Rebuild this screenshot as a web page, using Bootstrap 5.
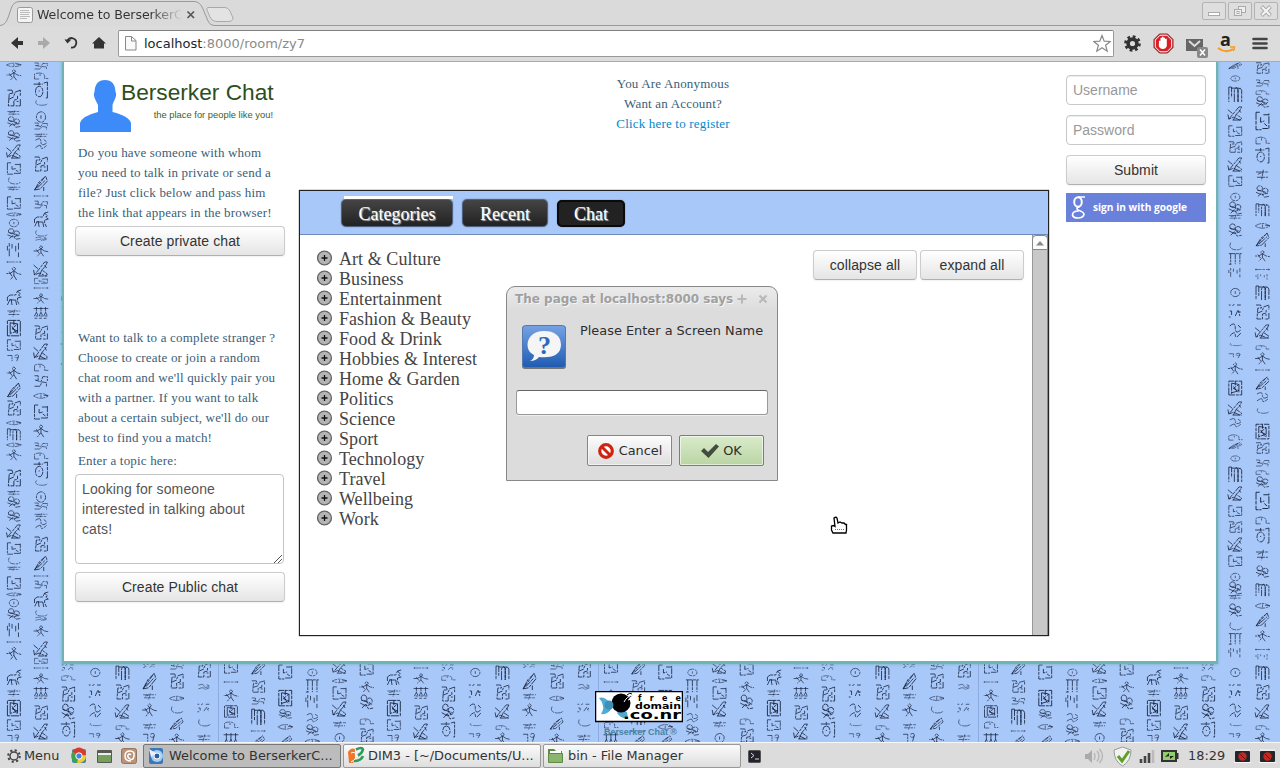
<!DOCTYPE html>
<html lang="en">
<head>
<meta charset="utf-8">
<meta name="viewport" content="width=device-width, initial-scale=1">
<title>Welcome to BerserkerChat</title>
<link rel="stylesheet" href="https://cdn.jsdelivr.net/npm/bootstrap@5.3.0/dist/css/bootstrap.min.css">
<style>
body{width:1280px;height:768px;overflow:hidden;font-family:"Liberation Sans",Arial,sans-serif;font-size:14px;line-height:20px;color:#333;background:#dcdcdc}
svg{display:block;flex:none}
.ui{font-family:"DejaVu Sans",sans-serif}
.serif{font-family:"Liberation Serif",serif;font-size:13px;line-height:20px;color:#3a6078;letter-spacing:.18px;white-space:nowrap}
.tabstrip{height:26px}
.tabtitle{left:37px;top:5px;width:146px;font-size:12.6px;white-space:nowrap;letter-spacing:-.1px;background:linear-gradient(90deg,#333 78%,#dcdcdc 100%);-webkit-background-clip:text;color:transparent}
.winbtns{top:2px;right:2px;gap:2px}
.winbtn{width:24px;height:18px;border:1px solid #b3b3b3;border-radius:2px;background:#dedede}
.toolbar{height:36px;border-bottom:1px solid #aaa;background:#dcdcdc}
.urlbar{width:996px;height:27px;margin-left:11px;border:1px solid #999;border-top-color:#808080;border-radius:2px;background:#fff;font-size:13px;color:#8b8b8b}
.page{height:680px;background:#a8c8fa;overflow:hidden}
.sheet{margin:0 62px;height:602px;background:#fff;border:solid #70b3b4;border-width:0 2px 3px;box-shadow:0 0 3px #70b3b4}
.leftcol{width:210px;margin-left:11px}
.midcol{width:750px;margin-left:14px}
.rightcol{width:140px;margin-left:17px;padding-top:13px;gap:10px}
.btn-soft{--bs-btn-padding-y:0;--bs-btn-font-size:14px;height:30px;line-height:28px;letter-spacing:.1px;color:#333;border:1px solid #ccc;border-bottom-color:#b0b0b0;border-radius:4px;background:linear-gradient(#fff,#e5e5e5);box-shadow:0 1px 2px rgba(0,0,0,.06)}
.field{height:30px;padding:0 6px;border:1px solid #c8c8c8;border-radius:4px;font-size:14px;box-shadow:inset 0 1px 1px rgba(0,0,0,.08)}
.field::placeholder{color:#999}
.brand-row{height:81px;padding:18px 0 0 4px}
.brand-title{font-size:22.7px;line-height:25px;color:#2c4f1b;white-space:nowrap;margin-left:-10px}
.brand-sub{font-size:9.4px;line-height:12px;color:#3b6129;margin-top:4px;text-align:right;width:155px;margin-left:-13px;white-space:nowrap}
.topic{height:90px;width:209px;padding:4px 6px;font-size:14px;line-height:20px;letter-spacing:.12px;color:#555;border:1px solid #c4c4c4;border-radius:4px;resize:none;overflow:hidden}
.chatbox{height:446px;margin-top:6px;border:1px solid #222;box-shadow:0 0 1px 0 #222;background:#fff}
.tabsrow{height:44px;background:#a8c8fa;border-bottom:1px solid #6e8bb8;padding:8px 0 0 41px;gap:9px}
.darktab{height:28px;border:1px solid #516180;border-radius:5px;background:linear-gradient(#444,#222);color:#fff;font:18px/28px "Liberation Serif",serif;text-align:center;text-shadow:1px 1px 1px #bbb;box-shadow:0 0 1px #333}
.darktab.now{border:2px solid #0a0a0a;background:#222;line-height:25px;height:27px;margin-top:1px}
.tabline{left:44px;top:5px;width:109px;height:3px;background:#fff}
.cats{font:18px/20px "Liberation Serif",serif;letter-spacing:.06px;color:#444;padding:14px 0 0 17px;white-space:nowrap}
.sbar{width:16px;background:#c8c8c8;border-left:1px solid #999;border-right:1px solid #888}
.sbtn{width:16px;height:15px;margin-left:-1px;border:1px solid #888;border-radius:4px 4px 0 0;background:#fbfbfb}
.gsign{height:29px;margin-top:-2px;background:#6a81dc;color:#fff;font:bold 10.15px/28px "Open Sans",sans-serif}
.prompt{left:506px;top:286px;width:272px;height:195px;border:1px solid #888;border-radius:9px 9px 0 0;background:linear-gradient(#ebebeb,#dcdcdc 24px);font-size:12.9px;color:#2e2e2e}
.prompt-head{height:24px;padding-left:8px;font-weight:bold;font-size:12px;line-height:24px;color:#a0a0a0;text-shadow:1px 1px 0 #f6f6f6;white-space:nowrap}
.prompt-input{height:25px;margin:21px 9px 0;border:1px solid #999;border-top-color:#666;border-radius:3px;background:#fff;box-shadow:0 1px 0 #eee}
.pbtn{width:85px;height:31px;border:1px solid #858585;border-radius:2px;background:linear-gradient(#fcfcfc,#dedede);gap:4px;box-shadow:inset 0 0 0 1px #fff9}
.pbtn.okay{background:linear-gradient(#d9ebcb,#bad5a4);border-color:#6d8a5b}
.taskbar{height:26px;border-top:1px solid #f6f6f6;background:#dcdcdc;font-size:12.9px;color:#333}
.task{width:198px;height:24px;border:1px solid #999;border-radius:2px;background:linear-gradient(#fafafa,#dedede);white-space:nowrap;padding-left:3px}
.task.on{background:#bcbcbc;border-color:#777}
</style>
</head>
<body>
<div class="d-flex flex-column position-relative">

<header class="tabstrip position-relative ui">
  <svg width="1280" height="26" fill="#dcdcdc" stroke="#999">
    <rect width="1280" height="26" stroke="none" fill="#dadada"/>
    <path d="M0 25.500C7 25 8 17 11 9Q13 1.500 20 1.500H194Q200 1.500 203 9L208 21Q210 25.500 214 25.500H1280" fill="none"/>
    <path d="M208 7.500H225Q228 7.500 230 11L233 18Q233 21.500 228 21.500H216Q212 21.500 210 17L207 10Q206 8 208 7.500Z" stroke="#aaa" fill="#e3e3e3"/>
    <rect x="17.500" y="7.500" width="15" height="15" rx="2" fill="#f4f4f4" stroke="#999"/>
    <path d="M20 10.500h9M20 12.500h10M20 14.500h9M20 16.500h10M20 18.500h7" stroke="#bbb"/>
    <path d="M187.500 11.500l6.500 6.500M194 11.500l-6.500 6.500" stroke="#555" stroke-width="1.700"/>
  </svg>
  <div class="tabtitle position-absolute">Welcome to BerserkerC</div>
  <div class="winbtns position-absolute d-flex">
    <div class="winbtn"><svg width="22" height="16"><rect x="5.500" y="9.500" width="11" height="3" fill="#fff" stroke="#aaa"/></svg></div>
    <div class="winbtn"><svg width="22" height="16" fill="#eee" stroke="#aaa"><rect x="9.500" y="3.500" width="7" height="6"/><rect x="5.500" y="6.500" width="7" height="6"/><rect x="8" y="8.500" width="2" height="2"/></svg></div>
    <div class="winbtn"><svg width="22" height="16"><path d="M6.500 3.500l9 9M15.500 3.500l-9 9" stroke="#aaa" stroke-width="4"/><path d="M7 4l8 8M15 4l-8 8" stroke="#f5f5f5" stroke-width="2"/></svg></div>
  </div>
</header>

<nav class="toolbar d-flex align-items-center ui">
  <svg width="107" height="35" fill="#333">
    <path d="M11 17l7-6v4h5v4h-5v4z"/><path d="M50 17l-7-6v4h-5v4h5v4z" fill="#aaa"/>
    <path d="M67.500 14.500A4.700 4.700 0 1 1 71 21.500" fill="none" stroke="#333" stroke-width="1.800"/><path d="M64.500 13.500h7l-4 4z"/>
    <path d="M92 17.500l7-6.500 7 6.500h-2v5H94v-5z"/>
  </svg>
  <div class="urlbar d-flex align-items-center">
    <svg class="ms-1" width="21" height="25" fill="#fafafa" stroke="#888"><path d="M2.500 5.500h6l4.500 4v9.500H2.500zM8.500 5.500v4.500h4.500"/></svg>
    <div class="flex-grow-1"><span class="text-dark">localhost</span>:8000/room/zy7</div>
    <svg style="margin-right:2px" width="18" height="20"><path d="M9 1.500l2.200 5.700 6 .3-4.600 3.700 1.600 6L9 13.800l-5.200 3.400 1.600-6L.8 7.500l6-.3z" fill="#fff" stroke="#888" stroke-width="1.200"/></svg>
  </div>
  <svg width="166" height="35">
    <circle cx="18.500" cy="17.500" r="4.400" fill="none" stroke="#333" stroke-width="3.600"/><circle cx="18.500" cy="17.500" r="7" fill="none" stroke="#333" stroke-width="2.600" stroke-dasharray="2.800 2.700"/>
    <path d="M45.500 8h8l5.500 5.500v8l-5.500 5.500h-8l-5.500-5.500v-8z" fill="#d81e26" stroke="#8c2222"/><path d="M46 9.200h7l4.700 4.800v7L53 25.800h-7L41.300 21v-7z" fill="none" stroke="#fff"/>
    <path d="M45 15q1-1 1.500 0v-3q1-1 1.500 0v-1q1-1 1.500 0v1q1-1 1.500 0v1q1.500-1 1.800 0v7q-1 3-4 3-3 0-4-3z" fill="#fff"/>
    <rect x="72" y="13" width="17" height="12" fill="#666"/><path d="M75 15l5.500 5 5.500-5" fill="none" stroke="#ddd" stroke-width="2"/>
    <rect x="83" y="21" width="11" height="11" rx="2" fill="#888"/><path d="M86 23.500l5 6M91 23.500l-5 6" stroke="#fff" stroke-width="1.500"/>
    <text x="106" y="20" font-family="Open Sans" font-weight="bold" font-size="18" fill="#222">a</text>
    <path d="M104 22q8 6 15 1" stroke="#f79a1d" stroke-width="2" fill="none"/><path d="M116 21h4.500q0 3-1.500 4" stroke="#f79a1d" stroke-width="1.500" fill="none"/>
    <path d="M139.500 13h13M139.500 17.500h13M139.500 22h13" stroke="#444" stroke-width="2.600" stroke-linecap="round"/>
  </svg>
</nav>

<main class="page position-relative">
  <svg class="position-absolute top-0 start-0" id="papyrus" width="1280" height="680"><defs><pattern id="tile" x="-162" y="0" width="380" height="380" patternUnits="userSpaceOnUse"></pattern></defs><rect width="1280" height="680" fill="url(#tile)"/></svg>

  <div class="sheet position-relative d-flex">
    <section class="leftcol">
      <div class="brand-row d-flex">
        <svg width="52" height="53" fill="#3d8bf8"><path d="M26 0Q36 0 36.500 12Q38 14 36 19Q34 23 33.500 25V32Q50 36 52 43V52H1V43Q3 36 19 32V25Q18 23 16 19Q14 14 15.500 12Q16 0 26 0Z"/></svg>
        <div><div class="brand-title">Berserker Chat</div><div class="brand-sub">the place for people like you!</div></div>
      </div>
      <div class="serif" style="padding-left:3px">Do you have someone with whom<br>you need to talk in private or send a<br>file? Just click below and pass him<br>the link that appears in the browser!</div>
      <button class="btn btn-soft w-100 d-block" style="margin-top:3px">Create private chat</button>
      <div class="serif" style="padding-left:3px;margin-top:72px">Want to talk to a complete stranger ?<br>Choose to create or join a random<br>chat room and we'll quickly pair you<br>with a partner. If you want to talk<br>about a certain subject, we'll do our<br>best to find you a match!</div>
      <div class="serif" style="padding-left:3px;margin-top:3px">Enter a topic here:</div>
      <div class="position-relative" style="margin-top:3px">
        <textarea class="topic d-block">Looking for someone
interested in talking about
cats!</textarea>
        <svg class="position-absolute bottom-0 end-0" width="11" height="10"><path d="M0 9l8-8M4 9l4-4" stroke="#555"/></svg>
      </div>
      <button class="btn btn-soft w-100 d-block mt-2">Create Public chat</button>
    </section>

    <section class="midcol">
      <div class="serif text-center" style="padding:12px 2px 0 0;height:122px">You Are Anonymous<br>Want an Account?<br><a class="text-decoration-none" style="color:#08c" href="#">Click here to register</a></div>
      <div class="chatbox d-flex flex-column position-relative">
        <div class="tabsrow d-flex flex-shrink-0">
          <div class="tabline position-absolute"></div>
          <div class="darktab" style="width:112px">Categories</div>
          <div class="darktab" style="width:86px">Recent</div>
          <div class="darktab now" style="width:68px">Chat</div>
        </div>
        <div class="d-flex flex-grow-1">
          <div class="cats flex-grow-1" id="cats"></div>
          <div class="d-flex" style="padding:15px 8px 0 0;gap:3px">
            <button class="btn btn-soft px-0" style="width:104px">collapse all</button>
            <button class="btn btn-soft px-0" style="width:104px">expand all</button>
          </div>
          <div class="sbar"><div class="sbtn"><svg width="14" height="13"><path d="M3 9.500l4-4.500 4 4.500z" fill="#888"/></svg></div></div>
        </div>
      </div>
    </section>

    <section class="rightcol d-flex flex-column">
      <input class="field form-control" placeholder="Username">
      <input class="field form-control" placeholder="Password">
      <button class="btn btn-soft">Submit</button>
      <div class="gsign d-flex">
        <svg width="27" height="29" fill="none" stroke="#fff"><ellipse cx="12" cy="9" rx="3.800" ry="4.800" stroke-width="2"/><path d="M12 4h7M14 13.500q-5 1-2 3.500 6 2 6 4.500-1 3.500-6 3.500t-5.500-3q0-4 6-4" stroke-width="1.700"/></svg>
        <span>sign in with google</span>
      </div>
    </section>
  </div>

  <svg class="position-absolute" style="left:595px;top:629px" width="88" height="54">
    <rect x=".5" y=".5" width="87" height="30" fill="#fff" stroke="#000" stroke-width="1.500"/>
    <path d="M4 7q5-2 11 5 2 3 2 5-4 7-11 6 3-5 2-8-1-5-4-8zM22 22q2-5 10-1l1 6q-6 2-11-5z" fill="#4fabd5"/><circle cx="26" cy="12" r="9.500"/><circle cx="14" cy="14" r="4.500" fill="#3d8fb5"/><path d="M29 11q3-6 9-7M33 9l6-2" stroke="#fff"/><path d="M32 4q3-3 5-1" stroke="#000" fill="none"/>
    <g font-family="DejaVu Sans" font-weight="bold" fill="#000"><text x="43" y="9.500" font-size="8" textLength="43">free</text><text x="40" y="17.500" font-size="8" textLength="46" lengthAdjust="spacingAndGlyphs">domain</text><text x="28" y="27.500" font-size="12.500" textLength="58" lengthAdjust="spacingAndGlyphs">.co.nr</text></g>
    <text x="9" y="44" font-family="Liberation Sans" font-size="9" font-weight="bold" fill="#4a829f" textLength="73">Berserker Chat ®</text>
  </svg>
</main>

<footer class="taskbar d-flex align-items-center ui">
  <svg style="margin-left:3px" width="21" height="22"><circle cx="11" cy="11" r="4" fill="none" stroke="#444" stroke-width="1.500"/><circle cx="11" cy="11" r="5.800" fill="none" stroke="#444" stroke-width="2" stroke-dasharray="2.200 2.350"/></svg>
  <span style="width:36px">Menu</span>
  <svg width="83" height="24">
    <rect x="12" y="5" width="14" height="14" rx="2" fill="#477eaa"/><circle cx="19" cy="12" r="7" fill="#f3cc30"/><path d="M19 12L12.500 8A7 7 0 0 1 26 11z" fill="#d83b2d"/><path d="M19 12L12.500 8A7 7 0 0 0 17 19z" fill="#3fa449"/><circle cx="19" cy="12" r="3.200" fill="#4186da" stroke="#fff"/>
    <rect x="37" y="6" width="15" height="13" rx="1" fill="#555b50"/><path d="M38 9h13v2H38z" fill="#eee"/><path d="M38 11h13v7H38z" fill="#769e5c"/>
    <rect x="61.500" y="4.500" width="15" height="15" rx="2" fill="#ba9278" stroke="#9a735d"/><path d="M71 17q-6 0-6-5t5-5 4 5-4 3-2-4 3 0" fill="none" stroke="#fff" stroke-width="1.500"/>
  </svg>
  <div class="task on d-flex align-items-center"><svg width="22" height="20"><rect x="2" y="2" width="14" height="16" rx="2" fill="#3b78b9"/><circle cx="10" cy="10" r="6" fill="#a9cef0"/><circle cx="10" cy="10" r="3" fill="#2c5f9e" stroke="#fff"/><path d="M2 3l7 4-5 4z" fill="#eef"/></svg><span>Welcome to BerserkerC...</span></div>
  <div class="task d-flex align-items-center" style="margin-left:2px"><svg width="21" height="22"><path d="M1 7q3-5 7-3v9l-2 5H2z" fill="#f0762b"/><path d="M9 4.500q6-3 7 0-1 4-5 6M7 16q7 0 9-5" fill="none" stroke="#2f9b5b" stroke-width="2.600"/><path d="M4 8q4-2 5 2t-5 7" stroke="#fff" fill="none"/></svg><span>DIM3 - [~/Documents/U...</span></div>
  <div class="task d-flex align-items-center" style="margin-left:2px"><svg width="21" height="22"><path d="M1 4h6l2 2h6v11H1z" fill="#5e8a43"/><path d="M3 6h11v3H3z" fill="#fff"/><path d="M1.500 8.500h14v9h-14z" fill="#8ab56c" stroke="#5e8a43"/></svg><span>bin - File Manager</span></div>
  <svg class="me-auto" width="24" height="22"><rect x="7.500" y="5.500" width="12" height="12" rx="1" fill="#23232e" stroke="#555"/><path d="M10 8l3 2.500-3 2.500M14 14h4" fill="none" stroke="#ddd"/></svg>
  <svg width="106" height="24">
    <path d="M3 10h3l4-4v13l-4-4H3z" fill="#aaa"/><path d="M12 9q2 3 0 7M15 7q4 5 0 10.500M17.500 5q6 7 0 14" fill="none" stroke="#b4b4b4" stroke-width="1.300"/>
    <path d="M40.500 3l8.500 3q0 11-8.500 16Q32 17 32 6z" fill="#f2f2ef" stroke="#999"/><path d="M36 12l4 5 7-10" fill="none" stroke="#5e9f2c" stroke-width="3"/>
    <path d="M59 19v-4M63 19v-7M67 19V9" stroke="#444" stroke-width="2.600"/><path d="M71 19V6" stroke="#bbb" stroke-width="2.600"/>
    <rect x="80" y="7" width="14" height="10" fill="#8fd06a" stroke="#333" stroke-width="2"/><path d="M95 9v6" stroke="#333" stroke-width="3"/><path d="M83 13l4-4v3h5l-4 3v-3z" fill="#222"/>
  </svg>
  <span style="width:38px;white-space:nowrap">18:29</span>
  <svg width="54" height="24"><g id="rb"><rect x="9" y="7" width="15" height="11" rx="1" fill="#24262b"/><path d="M9 6h15M8 18.500h17" stroke="#f8f8f8"/><circle cx="16.500" cy="12.500" r="4.200" fill="#c22820"/><path d="M14 10l5 5" stroke="#761010"/></g><use href="#rb" x="25"/></svg>
</footer>

<div class="prompt position-absolute ui">
  <div class="prompt-head d-flex align-items-center"><span style="width:222px">The page at localhost:8000 says</span>
    <svg width="34" height="24"><path d="M5 8v9M.5 12.500h9M22.500 9l7 7M29.500 9l-7 7" transform="translate(0 -.500)" stroke="#b8b8b8" stroke-width="2"/></svg></div>
  <div class="d-flex" style="height:58px">
    <svg style="margin:12px 0 0 14px" width="46" height="48"><defs><linearGradient id="q" x2="0" y2="1"><stop stop-color="#76a2e4"/><stop offset="1" stop-color="#1f5bb2"/></linearGradient></defs><rect x="1" y="3" width="44" height="43" rx="3" fill="#777"/><rect x="1.500" y="2.500" width="43" height="42" rx="3" fill="url(#q)" stroke="#5478b0"/><path d="M23 8C13 8 6.500 14 6.500 22q0 7 6.500 10 0 4-4 6 6 0 9-4Q40 36 40 21.500 39 8 23 8z" fill="#f5f5f5"/><text x="17" y="31" font-family="Liberation Serif" font-size="26" font-weight="bold" fill="#2f68bb">?</text></svg>
    <div style="margin:10px 0 0 13px;white-space:nowrap">Please Enter a Screen Name</div>
  </div>
  <div class="prompt-input"></div>
  <div class="d-flex justify-content-end" style="margin:20px 13px 0;gap:7px">
    <div class="pbtn d-flex align-items-center justify-content-center"><svg width="18" height="18"><circle cx="9" cy="9" r="6.300" fill="#fff" stroke="#cf2410" stroke-width="3.200"/><path d="M5 5l8 8" stroke="#cf2410" stroke-width="3"/></svg>Cancel</div>
    <div class="pbtn okay d-flex align-items-center justify-content-center"><svg width="18" height="16"><path d="M0 8l3-3 4 4 8-8 3 2.500L7.500 15z" fill="#444c40"/></svg>OK</div>
  </div>
</div>

<svg class="position-absolute" style="left:830px;top:516px" width="19" height="20"><path d="M4 2q2-1.500 3 0l1 5 2-1 2 1 2 0 1.500 1.500 1 0V14l-.5 3H3L1.500 14V10l2-.5 1.500 1z" fill="#fff" stroke="#000" stroke-width="1.300"/><path d="M5 13.500h9" stroke="#777" stroke-dasharray="1 1"/></svg>
</div>

<script src="https://cdn.jsdelivr.net/npm/bootstrap@5.3.0/dist/js/bootstrap.bundle.min.js"></script>
<script>
document.getElementById('cats').innerHTML = ['Art & Culture','Business','Entertainment','Fashion & Beauty','Food & Drink','Hobbies & Interest','Home & Garden','Politics','Science','Sport','Technology','Travel','Wellbeing','Work']
  .map(t => `<div class="d-flex align-items-center"><svg width="22" height="18" style="margin-top:-3px"><circle cx="7.500" cy="9" r="6.900" fill="#b5b5b5" stroke="#666" stroke-width="1.400"/><path d="M7.500 6v6M4.500 9h6" stroke="#111" stroke-width="1.300"/></svg><span>${t.replace('&','&amp;')}</span></div>`).join('');

// Hieroglyphs, each drawn in a 16x16 box
const glyph = {
  goat:'M1 7l3-2h6l2-4 3 3-2 1 3 2-4 1v3l2 4M10 10l1 5M4 9l-3 6M5 9l1 6M1 7v4M4 10h6M12 1l4-1',
  person:'M8 1l2 2-2 2-2-2zM8 5l-4 3H0M8 5l4 3 4 1M8 5v5l-4 5M8 10l3 5M3 6l3 5',
  bird:'M15 1l-3 0-11 13 5-2 7 3 2-2-6-4 4-4zM0 4l5 4M1 14l-1-5M9 9l-3 6M12 4l2 3M5 15h10',
  pots:'M3 0v7M8 0v7M13 0v7M0 2h6M6 2h5M11 2h5M3 7l-2 5h4zM8 7l-2 5h4zM13 7l-2 5h4zM1 15h3M6 15h3M11 15h3',
  box:'M1 1h5l1 3H3l-1 11h6V10l4-1V6M9 3l6-2v5M15 9v6h-5M3 9l5-2M11 11h2M9 4l-1 2',
  dense:'M1 15V2h14v13H1M4 4l8 1-6 4 6 2-8 2M4 4v10M8 2v4M12 5v8M6 7l5 6',
  bar:'M0 8h16M1 5v6M15 5v6',
  bridge:'M1 14V4q7-5 11 2v7h4M1 14h5M7 4v4',
  circ:'M6 4a4 5 0 1 0 .1 0M6 8v1M0 2h10M6 0v3M11 1l4-1v15h-2',
  eye:'M0 8q8-10 16 0-8 9-16 0M8 5v6M11 7h5',
  arch:'M1 1v14M1 1h3v10M7 15V4q2-5 4 0v11M11 15V4q2-4 4 0v11M4 2h9',
  feather:'M1 15L13 1l2 5-8 8zM4 13l9-8M1 15l5-8 5-4M11 12v4',
  frame:'M1 1v14h6M1 1h4M8 14h7V2M9 3h6M6 5v4l4-1M10 10l3 2',
  curve:'M3 1Q0 13 9 14q5 0 6-4',
  dots:'M1 2h2M5 3l2-2M10 2h4M2 8h2v4M8 13l3-6 2 6M1 14h2M13 8v2',
  lines:'M1 4h14M3 7l4-2M2 11h12M9 1l-2 14',
  zig:'M1 2h4v5H2l6 2 2-6h5v5M1 14h6l2-5 5 1v5',
  cluster:'M5 1a3 3 0 1 0 .1 0M11 4a3 3 0 1 0 .1 0M1 9l6 3 7-2M3 14l4-4 3 5 5-1M2 6l10 3',
  mm:'M1 2h14M3 2v13M8 2v13M13 2v13M1 15h3',
  dash:'M3 0v4M3 6v9M6 1v5M13 0v7M13 10v5M10 3v6M1 3v5',
  ess:'M2 3q6-5 6 2t6 2M2 13q6-6 6-1t6-2M11 2l3 3',
  seven:'M1 4h5v9M9 4q5-3 4 3-4 2-4-1M13 6l-2 8',
  circle:'M8 2a5 6 0 1 0 .1 0M8 6v4'
};
// Per column: glyph, top, height inside the 380px tile
const columns = [
 'eye 0 6,person 7 12,box 27 18,lines 48 6,cluster 54 12,cluster 68 12,bird 82 15,frame 100 13,curve 115 8,lines 124 5,frame 134 14,eye 150 5,circle 156 10,cluster 166 12,dash 181 15,bar 198 4,person 204 15,goat 228 16,lines 247 8,dense 256 19,frame 277 12,seven 291 10,person 304 14,feather 320 16,box 338 16,eye 358 6,arch 366 13',
 'zig 0 8,bridge 10 8,circ 20 17,curve 38 6,circle 48 14,zig 60 8,lines 71 5,ess 76 12,box 94 16,feather 113 16,bar 132 4,zig 138 9,goat 150 16,curve 168 7,ess 175 4,person 183 12,bird 199 16,frame 216 6,bar 224 4,person 231 11,pots 245 12,box 263 15,bird 281 17,bridge 301 9,zig 312 14,eye 330 8,frame 342 16,person 362 14',
 'dots 222 7,bridge 233 6,box 244 16,cluster 261 17,circ 280 16,bar 300 4',
 'feather 0 7,circle 13 7,arch 24 17,bird 44 15,frame 63 12,box 79 12,bird 95 15,frame 113 12,circle 130 10,cluster 139 14,lines 152 6,cluster 161 14,curve 180 9,mm 190 13,dash 206 10,circle 225 11,dots 241 16,ess 261 16,curve 281 3,seven 290 7,person 300 13,dense 317 17,bird 339 15,ess 356 10,bridge 372 7',
 'box 0 12,zig 17 8,bridge 28 5,cluster 34 12,frame 49 20,bridge 74 9,circ 86 16,lines 107 12,cluster 123 13,arch 141 14,eye 160 8,feather 170 15,person 188 12,bar 205 5,dash 212 6,arch 223 16,box 242 16,bird 262 15,bridge 283 5,person 290 13,bar 306 4,feather 314 14,ess 330 11,curve 346 6,dense 360 18',
 'dots 222 4,feather 230 18,lines 251 7,person 261 14,lines 281 7,seven 289 13',
 'zig 220 8,box 231 16,eye 253 7,curve 264 8,feather 275 13,person 291 13',
 'box 220 16,ess 242 6,dots 261 10,curve 277 8,lines 292 8',
 'frame 218 14,bar 238 4,person 247 13,dense 262 14,bridge 279 8,pots 291 14',
 'feather 218 15,box 238 13,zig 255 8,arch 266 18,bar 287 4,feather 293 12',
 'frame 222 16,dense 246 19,cluster 267 10,eye 281 8,feather 293 12',
 'circle 226 9,mm 236 15,dash 253 14,ess 271 10,cluster 282 12,eye 296 7',
 'bird 218 14,eye 236 6,frame 244 14,bird 259 16,lines 279 7,circle 290 12',
 'frame 219 15,person 239 12,cluster 252 16,bridge 276 7,box 286 15'
];
let out = '<path d="M.5 0V380" stroke="#8eabdf"/>';
columns.forEach((col, i) => {
  const x = (14 + i * 27.14 - 7.5 + 162) % 380;
  col.split(',').forEach((g, k) => {
    const [n, y, h] = g.split(' ');
    out += `<path d="${glyph[n]}" transform="translate(${x.toFixed(1)} ${y}) scale(.92 ${h / 16})" fill="none" stroke="#0c1730" stroke-width=".8" stroke-dasharray="${6 + k % 4} .8 3 1"/>`;
  });
});
document.getElementById('tile').innerHTML = out;
</script>
</body>
</html>
